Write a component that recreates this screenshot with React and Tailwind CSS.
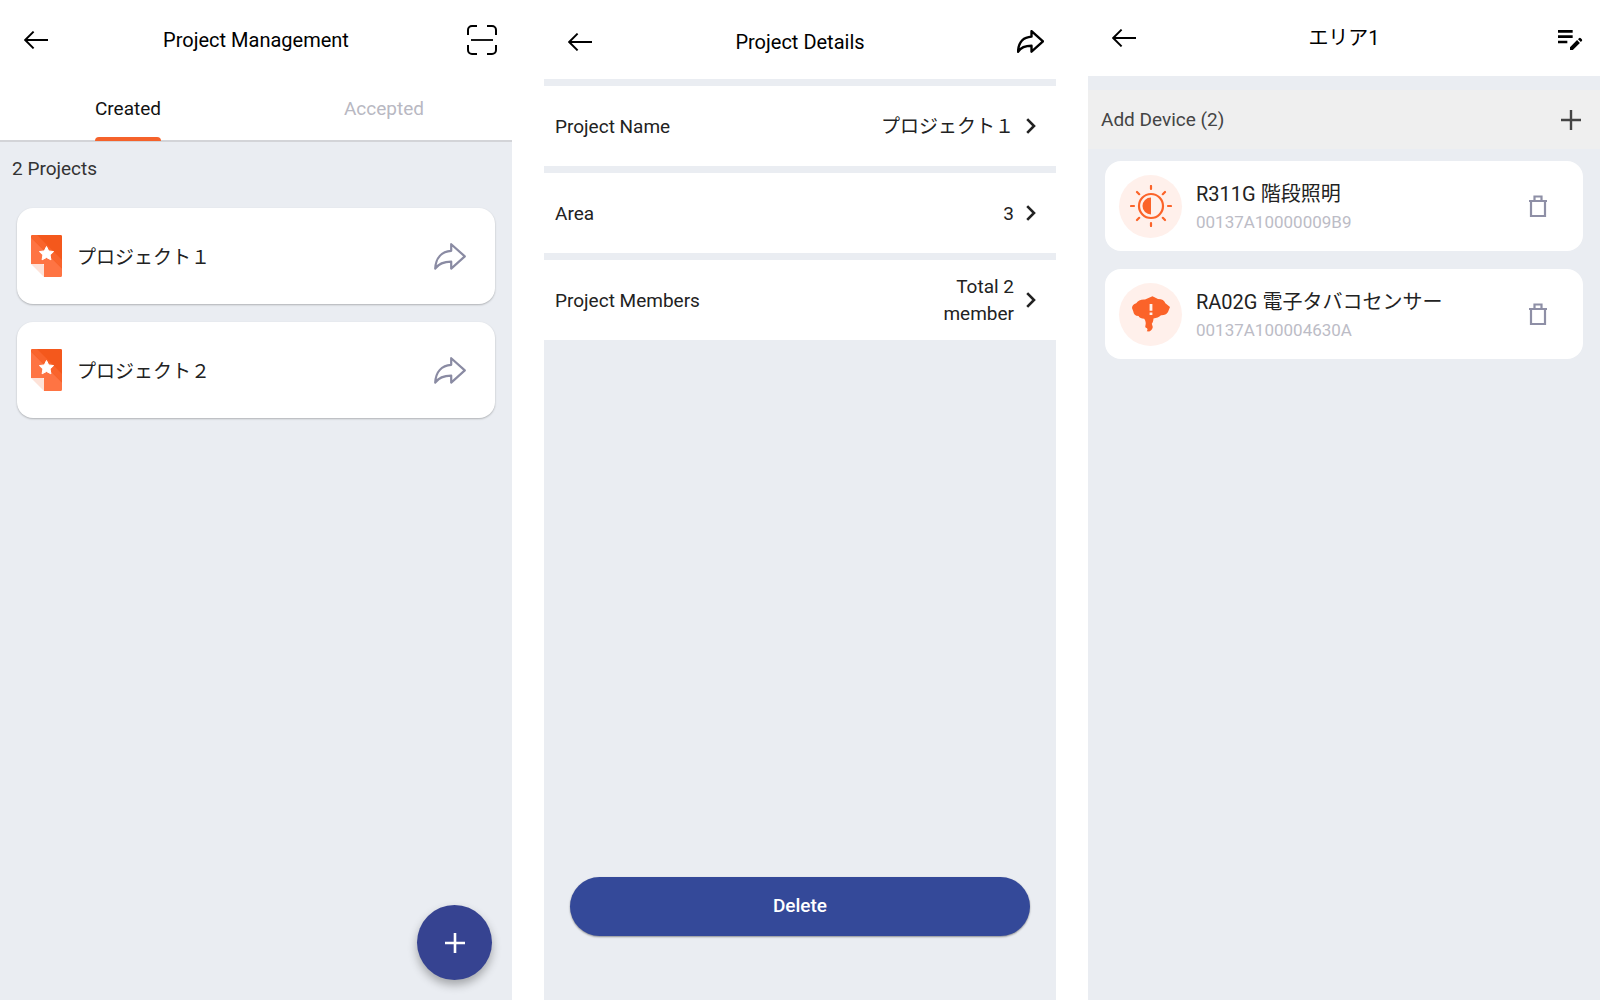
import { MdEditNote } from "react-icons/md"

const projects = [
  { id: 1, name: "プロジェクト１" },
  { id: 2, name: "プロジェクト２" },
]

const details = [
  { label: "Project Name", value: "プロジェクト１" },
  { label: "Area", value: "3" },
  { label: "Project Members", value: "Total 2\nmember" },
]

const BackIcon = () => (
  <svg viewBox="0 0 24 18" className="w-6 h-[18px]" fill="none" stroke="currentColor" strokeWidth="1.9">
    <path d="M9.6 0.6 1.2 9l8.4 8.4M1.2 9H24" />
  </svg>
)

const ScanIcon = () => (
  <svg viewBox="0 0 30 30" className="w-[30px] h-[30px]" fill="none" stroke="currentColor" strokeWidth="2">
    <path d="M1 10V5a4 4 0 0 1 4-4h5M20 1h5a4 4 0 0 1 4 4v5M29 20v5a4 4 0 0 1-4 4h-5M10 29H5a4 4 0 0 1-4-4v-5" />
    <path d="M4 15h22" strokeWidth="1.8" />
  </svg>
)

const ShareIcon = ({ className, strokeWidth }) => (
  <svg
    viewBox="0 0 32 27"
    className={className}
    fill="none"
    stroke="currentColor"
    strokeWidth={strokeWidth}
    strokeLinejoin="round"
  >
    <path d="M17.2 1.2 30.8 13.4 17.2 25.6v-7C9.6 18.6 4.8 20.4 1.2 25.6 1.8 14.8 7.6 8.4 17.2 7.8Z" />
  </svg>
)

const ProjectIcon = () => (
  <svg viewBox="0 0 31 42" className="w-[31px] h-[42px]">
    <path d="M0 1.5A1.5 1.5 0 0 1 1.5 0h28A1.5 1.5 0 0 1 31 1.5v39a1.5 1.5 0 0 1-1.5 1.5H13V29H0Z" fill="#fe7443" />
    <path d="M1.5 0h28A1.5 1.5 0 0 1 31 1.5v32L0 2.5v-1A1.5 1.5 0 0 1 1.5 0Z" fill="#f4581c" />
    <path d="M0 2.5 31 33.5V25L6 0H1.5L0 1.5Z" fill="#f9642c" />
    <path d="M0 29h11.5a1.5 1.5 0 0 1 1.5 1.5V42Z" fill="#fde2d8" />
    <path
      d="m15.5 11.5 2.2 4.4 4.9.7-3.5 3.4.8 4.8-4.4-2.300-4.4 2.300.8-4.800-3.500-3.400 4.900-.7Z"
      fill="#fff"
      stroke="#fff"
      strokeWidth="1"
      strokeLinejoin="round"
    />
  </svg>
)

const ChevronIcon = () => (
  <svg viewBox="0 0 10 16" className="w-[10px] h-4 shrink-0" fill="none" stroke="currentColor" strokeWidth="2.6">
    <path d="m1.2 1.2 6.8 6.8-6.8 6.8" />
  </svg>
)

const PlusIcon = ({ strokeWidth }) => (
  <svg viewBox="0 0 20 20" className="w-5 h-5" fill="none" stroke="currentColor" strokeWidth={strokeWidth}>
    <path d="M10 0v20M0 10h20" />
  </svg>
)

const TrashIcon = () => (
  <svg viewBox="0 0 18 22" className="w-[18px] h-[22px]" fill="none" stroke="currentColor" strokeWidth="2.2">
    <path d="M2 6h14v15H2ZM0 6h18M5.5 6V1.5h7V6" />
  </svg>
)

const LightIcon = () => (
  <svg viewBox="0 0 42 42" className="w-[42px] h-[42px]" fill="none" stroke="#fb6329" strokeWidth="2.2">
    <circle cx="21" cy="21" r="12" />
    <path d="M21 12.5v17a8.5 8.5 0 0 1 0-17Z" fill="#fb6329" stroke="none" />
    <path
      d="M21 1v3M21 38v3M1 21h3M38 21h3M7 7l2.2 2.2M32.8 32.8 35 35M35 7l-2.200 2.200M9.200 32.800 7 35"
      strokeLinecap="round"
    />
  </svg>
)

const SmokeIcon = () => (
  <svg viewBox="0 0 38 36" className="w-[38px] h-9">
    <path
      d="M13 3.500 20.500.2 26 3c4 0 6.500 1.500 7.400 4.200L38 11l-2 5c-1.500 2.400-4 3.400-7 3.200-2 1.800-4.500 2.800-7.500 3.300-.2 2.500-.6 3.800-1.700 5.300l1 3.200c-.4 2-1.600 3.600-3.600 4.600l-2.400-.4c.9-1.200.9-2 .2-2.900-1.700-.5-2.100-1.600-1.500-3.100.6-2.200.1-4.300-1.300-6.400-2.700 0-4.700-.9-5.700-2.700-3.200-.4-4.900-2-5.200-4.700L0 12c.2-2.400 1.600-4 4.200-4.700C5.800 4.600 9 3.200 13 3.500Z"
      fill="#fb6329"
    />
    <path d="M17.600 8h2.800v6.800h-2.800zM17.600 16.600h2.800V19h-2.800z" fill="#fff1ec" />
  </svg>
)

const devices = [
  { id: "00137A10000009B9", name: "R311G 階段照明", icon: LightIcon },
  { id: "00137A100004630A", name: "RA02G 電子タバコセンサー", icon: SmokeIcon },
]

const Header = ({ title, action, className }) => (
  <header className={`grid grid-cols-[1fr_auto_1fr] items-center bg-white text-black ${className}`}>
    <button type="button" aria-label="Back" className="justify-self-start pl-6">
      <BackIcon />
    </button>
    <h1 className="text-xl leading-7">{title}</h1>
    <div className="justify-self-end flex">{action}</div>
  </header>
)

const ProjectManagement = () => (
  <section className="flex flex-col bg-[#eaedf2]">
    <Header
      title="Project Management"
      className="h-[79px]"
      action={
        <button type="button" aria-label="Scan" className="pr-[15px]">
          <ScanIcon />
        </button>
      }
    />

    <nav className="grid grid-cols-2 h-[63px] bg-white border-b-2 border-[#d3d4d8] text-[19px]">
      <button type="button" className="relative justify-self-center text-[#111]">
        Created
        <span className="absolute inset-x-0 -bottom-px h-1 rounded-t bg-[#f5622b]" />
      </button>
      <button type="button" className="justify-self-center text-[#b8b8c2]">
        Accepted
      </button>
    </nav>

    <p className="px-3 pt-[13px] text-[19px] leading-7 text-[#333]">2 Projects</p>

    <ul className="flex flex-col gap-[18px] px-[17px] pt-[25px]">
      {projects.map((project) => (
        <li
          key={project.id}
          className="flex items-center h-24 pl-[14px] pr-[29px] bg-white rounded-2xl shadow-[0_1px_2px_rgba(0,0,0,0.25)]"
        >
          <ProjectIcon />
          <span className="flex-1 pl-[15px] pt-1 text-[19px] leading-7 text-[#222]">{project.name}</span>
          <button type="button" aria-label="Share" className="text-[#8a8ba3]">
            <ShareIcon className="w-8 h-[27px]" strokeWidth="2.2" />
          </button>
        </li>
      ))}
    </ul>

    <button
      type="button"
      aria-label="Add project"
      className="mt-auto self-end mr-5 mb-5 flex items-center justify-center w-[75px] h-[75px] rounded-full bg-[#364391] text-white shadow-[0_5px_10px_rgba(0,0,0,0.3)]"
    >
      <PlusIcon strokeWidth="2.6" />
    </button>
  </section>
)

const ProjectDetails = () => (
  <section className="flex flex-col bg-[#eaedf2]">
    <Header
      title="Project Details"
      className="h-[79px] pt-1"
      action={
        <button type="button" aria-label="Share" className="pr-3">
          <ShareIcon className="w-[27px] h-[23px]" strokeWidth="2.8" />
        </button>
      }
    />

    <ul className="flex flex-col gap-[7px] pt-[7px] text-[19px] leading-[27px] text-[#222]">
      {details.map((item) => (
        <li key={item.label}>
          <button type="button" className="flex items-center w-full h-20 pl-[11px] pr-5 bg-white">
            <span>{item.label}</span>
            <span className="ml-auto mr-3 text-right whitespace-pre-line">{item.value}</span>
            <ChevronIcon />
          </button>
        </li>
      ))}
    </ul>

    <button
      type="button"
      className="mt-auto mx-[26px] mb-16 h-[59px] rounded-full bg-[#344999] text-white text-[19px] font-medium shadow-[0_1px_2px_rgba(0,0,0,0.4)]"
    >
      Delete
    </button>
  </section>
)

const AreaDevices = () => (
  <section className="flex flex-col bg-[#eaedf2]">
    <Header
      title="エリア1"
      className="h-[76px]"
      action={
        <button type="button" aria-label="Edit" className="pr-[14px]">
          <MdEditNote className="w-8 h-8" />
        </button>
      }
    />

    <div className="flex items-center justify-between mt-[14px] h-[59px] pl-[13px] pr-[19px] bg-[#efefef] text-[#444]">
      <h2 className="text-[19px] leading-7">Add Device (2)</h2>
      <button type="button" aria-label="Add device">
        <PlusIcon strokeWidth="2.4" />
      </button>
    </div>

    <ul className="flex flex-col gap-[18px] px-[17px] pt-3">
      {devices.map((device) => {
        const Icon = device.icon

        return (
          <li key={device.id} className="flex items-center h-[90px] pl-[14px] pr-9 bg-white rounded-2xl">
            <div className="flex items-center justify-center w-[63px] h-[63px] rounded-full bg-[#fff0eb]">
              <Icon />
            </div>
            <div className="flex-1 pl-[14px] pt-1">
              <h3 className="text-xl leading-7 text-[#222]">{device.name}</h3>
              <p className="text-[17px] leading-7 text-[#bcbcc6]">{device.id}</p>
            </div>
            <button type="button" aria-label="Delete device" className="text-[#8e8fa6]">
              <TrashIcon />
            </button>
          </li>
        )
      })}
    </ul>
  </section>
)

const App = () => {
  return (
    <main
      lang="ja"
      className="grid grid-cols-3 gap-8 min-h-screen bg-white font-['Roboto','Noto_Sans_CJK_JP',sans-serif]"
    >
      <ProjectManagement />
      <ProjectDetails />
      <AreaDevices />
    </main>
  )
}

export default App
